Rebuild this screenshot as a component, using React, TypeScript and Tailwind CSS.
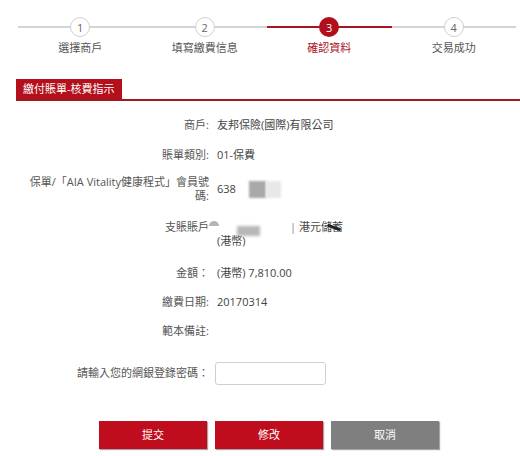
import React from 'react';

const steps = [
  { n: 1, label: '選擇商戶' },
  { n: 2, label: '填寫繳費信息' },
  { n: 3, label: '確認資料' },
  { n: 4, label: '交易成功' },
];

const ACTIVE = 3;

function Row({ label, children, className = '' }: { label: React.ReactNode; children?: React.ReactNode; className?: string }) {
  return (
    <div className={`flex items-start leading-[14px] ${className}`}>
      <div className="w-[209px] shrink-0 text-right text-[#555]">{label}</div>
      <div className="ml-[8px] text-[#444]">{children}</div>
    </div>
  );
}

export default function App() {
  return (
    <div
      className="w-[520px] h-[456px] bg-white text-[11px] overflow-hidden"
      style={{ fontFamily: '"Open Sans", "Noto Sans CJK TC", sans-serif' }}
    >
      {/* Steps */}
      <div className="flex pl-[18px] pr-[4px] pt-[17px]">
        {steps.map(s => {
          const active = s.n === ACTIVE;
          return (
            <div key={s.n} className="flex-1 flex flex-col items-center">
              <div className="relative w-full h-[20px] flex items-center justify-center">
                <div className={`absolute left-0 right-0 top-1/2 -translate-y-1/2 ${active ? 'h-[2px] bg-[#a6161f]' : 'h-[2px] bg-[#d4d4d4]'}`} />
                <div
                  className={`relative z-10 w-[20px] h-[20px] rounded-full flex items-center justify-center text-[11px] leading-none ${
                    active ? 'bg-[#b10f1c] text-white' : 'bg-white border border-[#cfcfcf] text-[#666]'
                  }`}
                >
                  {s.n}
                </div>
              </div>
              <div className={`mt-[4px] leading-[14px] ${active ? 'text-[#a8141e]' : 'text-[#555]'}`}>{s.label}</div>
            </div>
          );
        })}
      </div>

      {/* Tab header */}
      <div className="mt-[24px] ml-[16px] border-b-2 border-[#9e1a20]">
        <div className="inline-block bg-[#b3101c] text-white px-[7px] h-[20px] leading-[20px]">繳付賬單-核費指示</div>
      </div>

      {/* Details */}
      <div className="flex flex-col">
        <Row label="商戶:" className="mt-[17px]">友邦保險(國際)有限公司</Row>
        <Row label="賬單類別:" className="mt-[16px]">01-保費</Row>
        <Row
          label={<>保單/「AIA Vitality健康程式」會員號<br />碼:</>}
          className="mt-[13px]"
        >
          <div className="flex items-center h-[28px]">
            <span>638</span>
            <span className="ml-[13px] w-[17px] h-[17px] bg-[#a9a9a9] blur-[1px]" />
            <span className="w-[15px] h-[17px] bg-[#e8e8e8] blur-[1px]" />
          </div>
        </Row>
        <div className="flex items-start leading-[14px] mt-[17px]">
          <div className="w-[209px] shrink-0 text-right text-[#555] relative">
            支賬賬戶
            <span className="absolute right-[-10px] top-[1px] w-[10px] h-[5px] bg-[#b5b5b5] rounded-t-full blur-[0.5px]" />
          </div>
          <div className="ml-[8px] text-[#444]">
            <div className="flex items-start">
              <span className="w-[73px]" />
              <span className="text-[#888]">|</span>
              <span className="ml-[3px] relative">
                港元儲蓄
                <span className="absolute left-[28px] top-[6px] w-[14px] h-[3px] bg-[#222] rotate-[20deg] rounded-full" />
              </span>
            </div>
            <div className="relative">
              (港幣)
              <span className="absolute left-[20px] top-[-8px] w-[23px] h-[10px] bg-[#b8b8b8] blur-[1.5px]" />
            </div>
          </div>
        </div>
        <Row label="金額：" className="mt-[18px]">(港幣) 7,810.00</Row>
        <Row label="繳費日期:" className="mt-[15px]">20170314</Row>
        <Row label="範本備註:" className="mt-[15px]" />
        <div className="flex items-center mt-[24px]">
          <div className="w-[209px] shrink-0 text-right text-[#555]">請輸入您的網銀登錄密碼：</div>
          <input
            type="password"
            className="ml-[6px] w-[111px] h-[23px] border border-[#cfcfcf] rounded-[3px] bg-white outline-none"
          />
        </div>
      </div>

      {/* Buttons */}
      <div className="flex gap-[8px] ml-[99px] mt-[36px]">
        <button className="w-[108px] h-[28px] bg-[#c00d1d] text-white text-[11px] shadow-[1px_1px_1px_rgba(0,0,0,0.35)]">提交</button>
        <button className="w-[108px] h-[28px] bg-[#c00d1d] text-white text-[11px] shadow-[1px_1px_1px_rgba(0,0,0,0.35)]">修改</button>
        <button className="w-[108px] h-[28px] bg-[#7f7f7f] text-white text-[11px] shadow-[1px_1px_1px_rgba(0,0,0,0.35)]">取消</button>
      </div>
    </div>
  );
}
